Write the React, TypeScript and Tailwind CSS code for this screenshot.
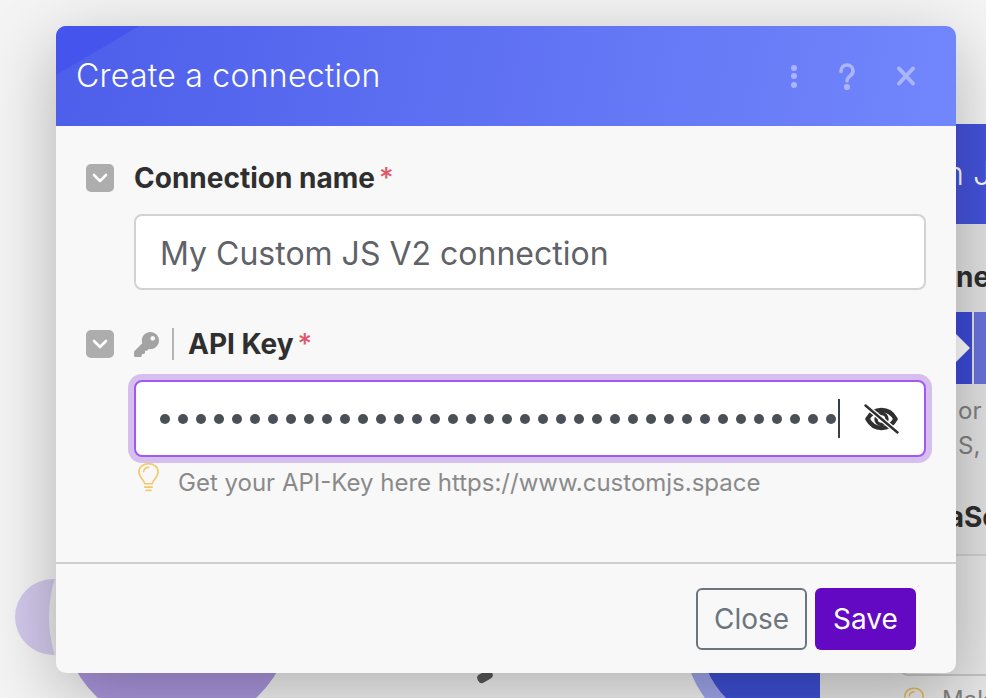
import { FaKey } from 'react-icons/fa';

function CheckToggle() {
  return (
    <div className="flex h-7 w-7 shrink-0 items-center justify-center rounded-[5px] bg-[#adadad]">
      <svg width="16" height="10" viewBox="0 0 16 10" fill="none" stroke="white" strokeWidth="2.6" strokeLinecap="round" strokeLinejoin="round">
        <path d="M2 2l6 6 6-6" />
      </svg>
    </div>
  );
}

function Required() {
  return <span className="ml-[4px] text-[28px] font-medium leading-none text-[#e0566b]">*</span>;
}

function Bulb({ className }: { className?: string }) {
  return (
    <svg className={className} viewBox="0 0 24 30" fill="none" stroke="currentColor" strokeWidth="1.7" strokeLinecap="round" strokeLinejoin="round">
      <path d="M8 22c0-4-6-6.500-6-12.200C2 4.700 6.500 1 12 1s10 3.700 10 8.800C22 15.500 16 18 16 22z" />
      <path d="M8 25.500h8" />
      <path d="M9.500 29h5" />
      <path d="M7 9.500c0-2.500 2-4.500 5-4.500" />
    </svg>
  );
}

function EyeOff() {
  return (
    <svg width="35" height="30" viewBox="0 0 35 30" fill="none" className="ml-auto shrink-0">
      <path d="M3.500 15C7 8.500 12 6 17.500 6S28 8.500 31.500 15C28 21.500 23 24 17.500 24S7 21.500 3.500 15z" stroke="#2f2f2f" strokeWidth="4.600" strokeLinejoin="round" />
      <circle cx="17.500" cy="15" r="5.500" stroke="#2f2f2f" strokeWidth="3.400" />
      <path d="M2 2l31 26" stroke="white" strokeWidth="5" />
      <path d="M1.500 1.500l32 27" stroke="#2f2f2f" strokeWidth="2.400" strokeLinecap="round" />
    </svg>
  );
}

// what sits behind the dialog, only the right edge of it shows
function BackgroundPanel() {
  return (
    <div className="absolute bottom-0 left-[820px] right-0 top-[124px] flex flex-col overflow-hidden bg-[#e2e2e2]">
      <div className="flex h-[100px] shrink-0 items-center bg-[#4453dc] pl-[116px] text-[32px] font-light text-white whitespace-nowrap">
        m JS
      </div>
      <div className="mt-[38px] pl-[136px] text-[28px] font-bold leading-[30px] text-[#2e2e2e] whitespace-nowrap">ne</div>
      <div className="mt-[20px] flex h-[72px] shrink-0 gap-[2px] pl-[100px]">
        <div className="flex w-[52px] items-center bg-[#3c4ad6] pl-[36px]">
          <div className="h-0 w-0 border-y-[14px] border-l-[14px] border-y-transparent border-l-white" />
        </div>
        <div className="flex-1 bg-[#6a74dc]" />
      </div>
      <div className="mt-[9px] pl-[138px] text-[24px] leading-[35px] text-[#808080] whitespace-nowrap">
        <div>or</div>
        <div>S,</div>
      </div>
      <div className="mt-[36px] pl-[79px] text-[28px] font-bold leading-[36px] text-[#2e2e2e] whitespace-nowrap">JavaScript</div>
      <div className="mt-[19px] flex flex-1 flex-col border-t-2 border-[#cfcfcf] bg-[#e6e6e6] pl-[80px]">
        <div className="mt-[74px] h-[46px] shrink-0 rounded-bl-lg border-b-2 border-l-2 border-[#c4c4c4]" />
        <div className="ml-[3px] mt-[10px] flex items-start gap-[17px] text-[24px] leading-[28px] text-[#808080]">
          <Bulb className="h-[30px] w-[22px] shrink-0 text-[#e6b95c]" />
          <span>Make</span>
        </div>
      </div>
    </div>
  );
}

export default function App() {
  return (
    <div
      className="relative h-[698px] w-[986px] overflow-hidden bg-[#f4f4f4] pl-[56px] pt-[26px]"
      style={{ fontFamily: 'Inter, "Liberation Sans", sans-serif' }}
    >
      {/* scenario nodes behind the dialog */}
      <div className="absolute left-[15px] top-[579px] h-[76px] w-[76px] overflow-hidden rounded-full bg-[#d3c9ec]">
        <div className="absolute left-[34px] top-[-92px] h-[260px] w-[260px] rounded-full bg-[#ececec]" />
      </div>
      <div className="absolute left-[61px] top-[497px] h-[232px] w-[232px] rounded-full bg-[#ac98e0]" />
      <div className="absolute left-[684px] top-[530px] h-[210px] w-[210px] rounded-full bg-[#a0a8ee] p-[16px]">
        <div className="h-full w-full rounded-full bg-[#3e50d6]" />
      </div>
      <div className="absolute left-[477px] top-[672px] h-[9px] w-[16px] -rotate-[30deg] rounded-[4px] bg-[#5a5a5a]" />
      <BackgroundPanel />

      <div className="relative flex h-[647px] w-[900px] flex-col overflow-hidden rounded-[10px] bg-[#f8f8f8] shadow-[0_20px_70px_rgba(0,0,0,0.28)]">
        <div className="relative flex h-[100px] shrink-0 items-center justify-between overflow-hidden bg-[linear-gradient(100deg,#4d5eea,#7286fc)] pl-[20px] pr-[41px]">
          <div className="absolute left-0 top-0 h-[49px] w-[83px] bg-[#4454ec] [clip-path:polygon(0_0,100%_0,0_100%)]" />
          <span className="relative text-[32px] font-light leading-none tracking-[0.25px] text-white">Create a connection</span>
          <div className="flex items-center gap-[42px] text-[#abb5fc]">
            <div className="flex flex-col gap-[2.5px]">
              <span className="h-[6px] w-[6px] rounded-full bg-[#abb5fc]" />
              <span className="h-[6px] w-[6px] rounded-full bg-[#abb5fc]" />
              <span className="h-[6px] w-[6px] rounded-full bg-[#abb5fc]" />
            </div>
            <svg width="16" height="27" viewBox="0 0 16 27" fill="none" stroke="currentColor" strokeWidth="3.600" strokeLinecap="round">
              <path d="M2 8.500C2 4.500 4.500 2 8 2c3.500 0 6 2.500 6 6 0 3.500-2.500 4.500-4.500 6.500C8.500 15.500 8 16.500 8 18" />
              <circle cx="8" cy="24" r="1.300" fill="currentColor" />
            </svg>
            <svg width="18" height="20" viewBox="0 0 18 20" fill="none" stroke="currentColor" strokeWidth="4" strokeLinecap="round">
              <path d="M2 2.500l14 15M16 2.500l-14 15" />
            </svg>
          </div>
        </div>

        <div className="flex flex-1 flex-col px-[30px]">
          <div className="mt-[38px] flex items-center gap-[20px]">
            <CheckToggle />
            <div className="flex items-start">
              <span className="text-[28px] font-bold leading-[28px] text-[#2f2f2f]">Connection name</span>
              <Required />
            </div>
          </div>
          <div className="ml-[48px] mt-[22px] flex h-[76px] items-center rounded-[8px] border-2 border-[#d2d2d2] bg-white pl-[24px] pt-[3px] text-[32px] text-[#5f6368]">
            My Custom JS V2 connection
          </div>

          <div className="mt-[38px] flex items-center">
            <CheckToggle />
            <FaKey className="ml-[20px] h-[25px] w-[25px] text-[#a3a3a3]" />
            <div className="ml-[13px] h-[32px] w-[2px] bg-[#b5b5b5]" />
            <div className="ml-[14px] flex items-start">
              <span className="text-[28px] font-bold leading-[28px] text-[#2f2f2f]">API Key</span>
              <Required />
            </div>
          </div>
          <div className="ml-[48px] mt-[20px] flex h-[77px] shrink-0 items-center rounded-[8px] border-2 border-[#a259f0] bg-white pl-[24px] pr-[25px] shadow-[0_0_0_6px_#d6bfee]">
            <div className="flex gap-[8px]">
              {Array.from({ length: 38 }).map((_, i) => (
                <span key={i} className="h-[10px] w-[10px] rounded-full bg-[#495057]" />
              ))}
            </div>
            <div className="ml-[2px] h-[39px] w-[2px] bg-[#3a3f45]" />
            <EyeOff />
          </div>
          <div className="ml-[51px] mt-[5px] flex items-start gap-[18px]">
            <Bulb className="h-[30px] w-[23px] shrink-0 text-[#f5c768]" />
            <span className="mt-[5px] text-[24px] leading-[32px] text-[#8a8a8a]">Get your API-Key here https://www.customjs.space</span>
          </div>
        </div>

        <div className="flex h-[111px] shrink-0 items-start justify-end gap-[8px] border-t-2 border-[#cfcfcf] pr-[40px] pt-[24px]">
          <button className="flex h-[62px] w-[111px] items-center justify-center rounded-[6px] border-2 border-[#6c757d] text-[28px] text-[#6c757d]">Close</button>
          <button className="flex h-[62px] w-[101px] items-center justify-center rounded-[6px] bg-[#6309c3] text-[28px] text-white">Save</button>
        </div>
      </div>
    </div>
  );
}
